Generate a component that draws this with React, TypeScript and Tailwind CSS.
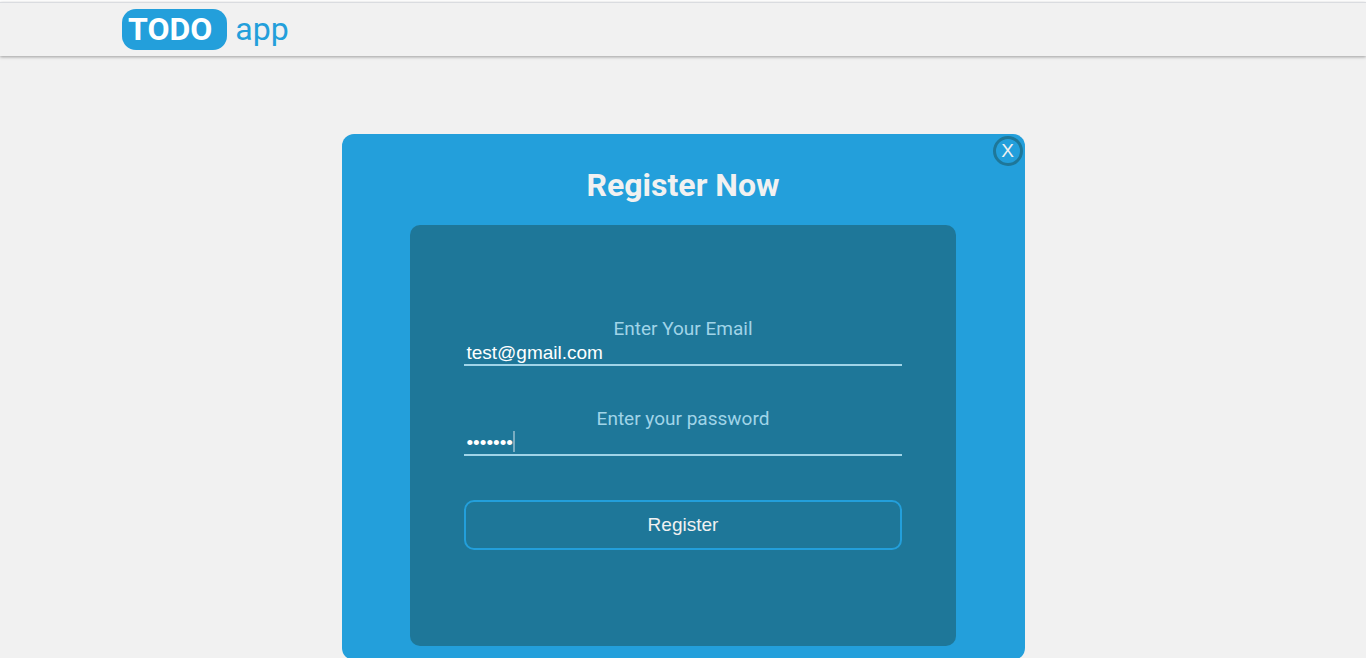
import { useState } from "react";

type FieldProps = {
  id: string;
  label: string;
  type: string;
  value: string;
  onChange: (value: string) => void;
  caret?: boolean;
};

function Field({ id, label, type, value, onChange, caret }: FieldProps) {
  return (
    <div className="flex flex-col">
      <label htmlFor={id} className="text-center text-[19px] leading-6 text-[#a0d4e8]">
        {label}
      </label>
      <div className="relative">
        <input
          id={id}
          type={type}
          value={value}
          onChange={(event) => onChange(event.target.value)}
          className="block h-[25px] w-full border-b-2 border-[#a0d4e8] bg-transparent px-[2px] font-['Liberation_Sans',Arial,sans-serif] text-[19px] leading-6 text-white outline-none"
        />
        {caret && <span className="absolute top-0 left-[49px] h-[21px] w-[2px] bg-[#79adc2]" />}
      </div>
    </div>
  );
}

export default function App() {
  const [email, setEmail] = useState("test@gmail.com");
  const [password, setPassword] = useState("test123");

  return (
    <div className="flex min-h-screen flex-col border-t-2 border-white bg-[#f1f1f1] font-[Roboto,sans-serif]">
      <header className="flex h-[54px] items-center border-t border-[#dadce0] px-[122px] text-[32px] leading-[41px] text-[#239fdb] shadow-[0_1px_3px_rgba(0,0,0,0.35)]">
        <a href="#" className="flex items-center gap-2">
          <span className="rounded-[14px] bg-[#239fdb] pr-[15px] pl-[6px] font-bold text-white">TODO</span>
          <span>app</span>
        </a>
      </header>

      <main className="flex justify-center pt-[78px]">
        <section
          aria-labelledby="register-title"
          className="relative flex w-1/2 flex-col items-center rounded-[12px] bg-[#239fdb] pt-7 pb-[14px]"
        >
          <button
            type="button"
            aria-label="Close"
            className="absolute top-[2px] right-[2px] flex size-[30px] items-center justify-center rounded-full border-[3px] border-[#1e7799] font-['Liberation_Sans',Arial,sans-serif] text-[19px] leading-6 text-[#f1f1f1]"
          >
            X
          </button>
          <h1 id="register-title" className="text-[32px] leading-[46px] font-bold text-[#f1f1f1]">
            Register Now
          </h1>
          <form
            onSubmit={(event) => event.preventDefault()}
            className="mt-[17px] flex w-4/5 flex-col gap-[41px] rounded-[10px] bg-[#1e7799] px-[8%] pt-[92px] pb-24"
          >
            <Field id="email" label="Enter Your Email" type="email" value={email} onChange={setEmail} />
            <Field
              id="password"
              label="Enter your password"
              type="password"
              value={password}
              onChange={setPassword}
              caret
            />
            <button
              type="submit"
              className="mt-[3px] h-[50px] rounded-[10px] border-2 border-[#239fdb] font-['Liberation_Sans',Arial,sans-serif] text-[19px] text-[#f1f1f1]"
            >
              Register
            </button>
          </form>
        </section>
      </main>
    </div>
  );
}
